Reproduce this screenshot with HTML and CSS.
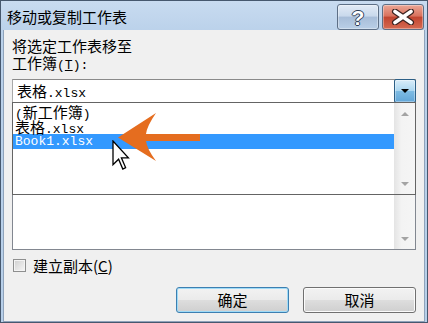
FILE: index.html
```html
<!DOCTYPE html>
<html lang="zh-CN">
<head>
<meta charset="utf-8">
<title>移动或复制工作表</title>
<link rel="stylesheet" href="styles.css">
</head>
<body>
<div class="window">
  <div class="titlebar">
    <span class="title">移动或复制工作表</span>
    <div class="caption-buttons">
      <div class="cap help"><span class="q">?</span></div>
      <div class="cap close">
        <svg class="x-icon" width="26" height="16" viewBox="0 0 26 16">
          <path d="M5 2.5 L21 13.5 M21 2.5 L5 13.5" stroke="#3a2320" stroke-width="6" stroke-linecap="round" fill="none"/>
          <path d="M5 2.5 L21 13.5 M21 2.5 L5 13.5" stroke="#ffffff" stroke-width="3.6" stroke-linecap="round" fill="none"/>
        </svg>
      </div>
    </div>
  </div>
  <div class="client">
    <div class="label">将选定工作表移至<br>工作簿<span class="lt">(<u>T</u>):</span></div>
    <div class="combo">
      <div class="combo-text"><span class="cj">表格</span>.xlsx</div>
      <div class="drop-btn"><span class="tri-down"></span></div>
      <div class="dropdown">
        <div class="items">
          <div class="item">(<span class="cj">新工作簿</span>)</div>
          <div class="item"><span class="cj">表格</span>.xlsx</div>
          <div class="item selected">Book1.xlsx</div>
        </div>
        <div class="scrollbar">
          <div class="sb-btn"><span class="tri-up-g"></span></div>
          <div class="sb-track"></div>
          <div class="sb-btn"><span class="tri-down-g"></span></div>
        </div>
      </div>
    </div>
    <div class="listbox">
      <div class="list-items"></div>
      <div class="scrollbar">
        <div class="sb-btn"><span class="tri-up-g"></span></div>
        <div class="sb-track"></div>
        <div class="sb-btn"><span class="tri-down-g"></span></div>
      </div>
    </div>
    <div class="check-row"><span class="checkbox"></span><span class="check-label">建立副本(<u>C</u>)</span></div>
    <div class="buttons">
      <button class="btn default">确定</button>
      <button class="btn">取消</button>
    </div>
    <svg class="annot-arrow" width="100" height="60" viewBox="0 0 100 60">
      <path d="M8 29.5 L46 5 Q37 18 36 26 L90 26 L90 33 L36 33 Q37 41 46 53 Z" fill="#e56d1f"/>
    </svg>
    <svg class="cursor" width="18" height="31" viewBox="0 0 18 31">
      <path d="M1 1 L1 24.8 L6.6 19.2 L10.8 29 L13.6 27.6 L9.4 17.8 L16.4 17.8 Z" fill="#ffffff" stroke="#000000" stroke-width="1.3" stroke-linejoin="miter"/>
    </svg>
  </div>
</div>
</body>
</html>
```

FILE: styles.css
```css
* { box-sizing: border-box; }
html, body { margin: 0; padding: 0; }
body {
  width: 428px;
  height: 323px;
  overflow: hidden;
  background: #ffffff;
  font-family: "Noto Sans CJK SC", sans-serif;
  color: #000;
}
.window {
  width: 428px;
  height: 323px;
  border: 1px solid #46586e;
  background: linear-gradient(#c8dbf0, #bad1ea 32px, #b7cfe9);
  padding: 0 2px 1px 2px;
  display: flex;
  flex-direction: column;
}
.titlebar {
  height: 31px;
  display: flex;
  align-items: flex-start;
  padding-left: 4px;
}
.title {
  font-size: 15px;
  line-height: 17px;
  margin-top: 7px;
}
.caption-buttons {
  margin-left: auto;
  margin-top: 3px;
  margin-right: 1px;
  display: flex;
  gap: 3px;
}
.cap {
  width: 42px;
  height: 26px;
  border: 1px solid #5d6f86;
  border-radius: 3px;
  display: flex;
  align-items: center;
  justify-content: center;
  box-shadow: inset 0 0 0 1px rgba(255,255,255,0.35);
}
.help {
  background: linear-gradient(#e2ebf6, #c9d9ec 45%, #a8bed9 52%, #b9cfe7);
}
.close {
  background: linear-gradient(#eba796, #d9735f 45%, #c24631 52%, #d56a51);
}
.q {
  font-family: "Liberation Sans", sans-serif;
  font-weight: bold;
  font-size: 21px;
  line-height: 21px;
  color: #ffffff;
  text-shadow: 1px 0 0 #2d3e55, -1px 0 0 #2d3e55, 0 1px 0 #2d3e55, 0 -1px 0 #2d3e55;
}
.x-icon { display: block; }
.client {
  flex: 1;
  position: relative;
  background: #f0f0f0;
  border: 1px solid #8fa3bb;
  border-top: none;
  padding: 7px 8px 8px 8px;
  display: flex;
  flex-direction: column;
}
.label {
  font-size: 15px;
  line-height: 17px;
}
.lt {
  font-family: "Liberation Mono", monospace;
  font-size: 13px;
}
.combo {
  position: relative;
  margin-top: 5px;
  height: 24px;
  border: 1px solid #a9a9a9;
  border-top-color: #8a8a8a;
  background: #ffffff;
  display: flex;
}
.combo-text {
  flex: 1;
  padding-left: 4px;
  height: 22px;
  line-height: 22px;
  font-family: "Liberation Mono", monospace;
  font-size: 13px;
  white-space: nowrap;
}
.cj {
  font-family: "Noto Sans CJK SC", sans-serif;
  font-size: 15px;
}
.drop-btn {
  width: 22px;
  height: 24px;
  margin: -1px -1px -1px 0;
  border: 1px solid #2c5f86;
  border-radius: 2px;
  background: linear-gradient(#d9edf9, #acd7f1 48%, #7dbbe3 52%, #62a6d8);
  box-shadow: inset 0 0 0 1px rgba(255,255,255,0.35);
  display: flex;
  align-items: center;
  justify-content: center;
}
.tri-down {
  width: 0;
  height: 0;
  border-left: 4px solid transparent;
  border-right: 4px solid transparent;
  border-top: 4px solid #000;
}
.dropdown {
  position: absolute;
  left: -1px;
  right: -1px;
  top: 22px;
  height: 93px;
  border: 1px solid #646464;
  background: #ffffff;
  display: flex;
  z-index: 2;
}
.items {
  flex: 1;
  padding-top: 1px;
}
.item {
  height: 15px;
  line-height: 15px;
  padding-left: 2px;
  font-family: "Liberation Mono", monospace;
  font-size: 13px;
  white-space: nowrap;
}
.item.selected {
  background: #3399ff;
  color: #ffffff;
}
.scrollbar {
  width: 21px;
  display: flex;
  flex-direction: column;
  background: linear-gradient(90deg, #e4e4e4, #f3f3f3 35%, #f5f5f5);
}
.sb-btn {
  height: 21px;
  display: flex;
  align-items: center;
  justify-content: center;
}
.sb-track { flex: 1; }
.tri-up-g {
  width: 0;
  height: 0;
  border-left: 4px solid transparent;
  border-right: 4px solid transparent;
  border-bottom: 4px solid #a3a3a3;
}
.tri-down-g {
  width: 0;
  height: 0;
  border-left: 4px solid transparent;
  border-right: 4px solid transparent;
  border-top: 4px solid #a3a3a3;
}
.listbox {
  margin-top: -1px;
  height: 148px;
  border: 1px solid #828790;
  background: #ffffff;
  display: flex;
}
.list-items { flex: 1; }
.check-row {
  margin-top: 7px;
  height: 17px;
  display: flex;
  align-items: center;
  font-size: 15px;
  line-height: 17px;
}
.checkbox {
  width: 13px;
  height: 13px;
  margin-left: 1px;
  margin-right: 7px;
  border: 1px solid #8e8f8f;
  background: linear-gradient(135deg, #cfcfcf, #f7f7f7);
  box-shadow: inset 0 0 0 1px #f4f4f4;
}
.buttons {
  margin-top: 13px;
  display: flex;
  justify-content: flex-end;
  gap: 14px;
}
.btn {
  width: 113px;
  height: 26px;
  padding: 0;
  border: 1px solid #707070;
  border-radius: 3px;
  background: linear-gradient(#f2f2f2, #ebebeb 48%, #dddddd 52%, #cfcfcf);
  box-shadow: inset 0 0 0 1px #fbfbfb;
  font-family: "Noto Sans CJK SC", sans-serif;
  font-size: 15px;
  line-height: 22px;
  color: #000;
}
.btn.default {
  border-color: #3c7fb1;
  box-shadow: inset 0 0 0 1px #9fdbf7;
}
.annot-arrow {
  position: absolute;
  left: 106px;
  top: 78px;
  z-index: 5;
}
.cursor {
  position: absolute;
  left: 108px;
  top: 110px;
  z-index: 6;
}
```
